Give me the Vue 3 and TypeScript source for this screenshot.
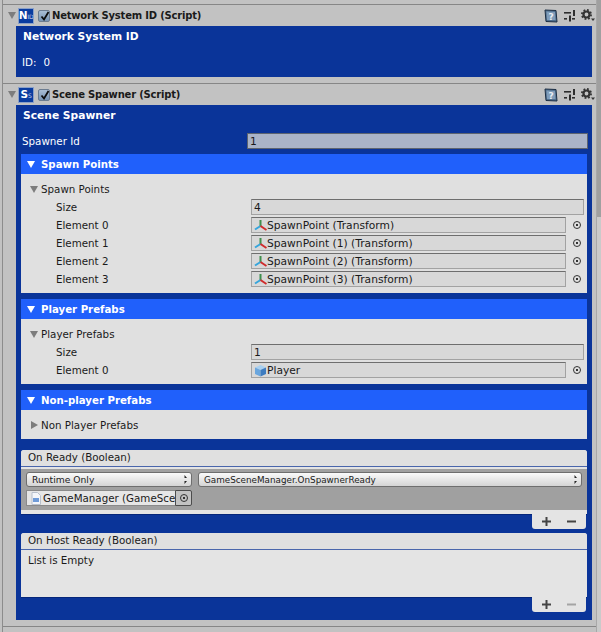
<script setup lang="ts">
type Row = { label: string; value: string; icon?: 'transform' | 'cube' };

const spawnRows: Row[] = [
  { label: 'Size', value: '4' },
  { label: 'Element 0', value: 'SpawnPoint (Transform)', icon: 'transform' },
  { label: 'Element 1', value: 'SpawnPoint (1) (Transform)', icon: 'transform' },
  { label: 'Element 2', value: 'SpawnPoint (2) (Transform)', icon: 'transform' },
  { label: 'Element 3', value: 'SpawnPoint (3) (Transform)', icon: 'transform' },
];

const playerRows: Row[] = [
  { label: 'Size', value: '1' },
  { label: 'Element 0', value: 'Player', icon: 'cube' },
];

const sections = [
  { title: 'Spawn Points', rows: spawnRows, open: true },
  { title: 'Player Prefabs', rows: playerRows, open: true },
  { title: 'Non-player Prefabs', foldout: 'Non Player Prefabs', rows: [] as Row[], open: false },
];

const components = [
  { big: 'N', small: 'ID', name: 'Network System ID (Script)' },
  { big: 'S', small: 'S', name: 'Scene Spawner (Script)' },
];
</script>

<template>
  <div class="window">
    <div class="main">
      <template v-for="(comp, i) in components" :key="comp.name">
        <div class="comp-head">
          <span class="fold"></span>
          <span class="script-icon"><b>{{ comp.big }}</b><i>{{ comp.small }}</i></span>
          <span class="check">
            <svg width="11" height="11" viewBox="0 0 11 11"><path d="M2.5 5.5 L5 8.5 L9.5 1" fill="none" stroke="#0c0c0c" stroke-width="1.8" /></svg>
          </span>
          <span class="comp-name">{{ comp.name }}</span>
          <span class="head-icons">
            <svg class="book" width="14" height="14" viewBox="0 0 14 14">
              <path d="M1 1 L12 1.5 L13 13 L2 12.5 Z" fill="#4f6f8f" stroke="#1c2e44" />
              <path d="M2.5 2.5 L11 3 L11.5 11 L3 11 Z" fill="#7f9cb9" />
              <text x="7" y="10.5" text-anchor="middle" class="q">?</text>
            </svg>
            <svg class="sliders" width="12" height="12" viewBox="0 0 12 12" fill="#2e2e2e">
              <rect x="0" y="2" width="7" height="1.6" />
              <rect x="9" y="0" width="2" height="6" />
              <rect x="0" y="8" width="3" height="1.6" />
              <rect x="5" y="5.5" width="2" height="6" />
              <rect x="8" y="8" width="3" height="1.6" />
            </svg>
            <svg class="gear" width="14" height="13" viewBox="0 0 14 13" fill="none">
              <circle cx="5.5" cy="5.5" r="3" stroke="#333" stroke-width="2.2" />
              <circle cx="5.5" cy="5.5" r="4.6" stroke="#333" stroke-width="1.8" stroke-dasharray="1.8 1.81" />
              <path d="M10 9.5 H14 L12 12 Z" fill="#333" />
            </svg>
          </span>
        </div>

        <div v-if="i === 0" class="panel small-panel">
          <div class="panel-title">Network System ID</div>
          <div class="id-row"><span>ID:</span><span>0</span></div>
        </div>

        <div v-else class="panel">
          <div class="panel-title">Scene Spawner</div>
          <div class="spawner-row">
            <span class="spawner-label">Spawner Id</span>
            <span class="field spawner-field">1</span>
          </div>

          <section v-for="s in sections" :key="s.title" class="section">
            <div class="section-head"><span class="white-tri"></span>{{ s.title }}</div>
            <div class="section-body">
              <div class="foldout">
                <span :class="s.open ? 'tri-down' : 'tri-right'"></span>{{ s.foldout ?? s.title }}
              </div>
              <div v-for="r in s.rows" :key="r.label" class="row">
                <span class="row-label">{{ r.label }}</span>
                <span class="field">
                  <svg v-if="r.icon === 'transform'" class="obj-icon" width="13" height="13" viewBox="0 0 13 13" fill="none" stroke-width="2">
                    <path d="M6.5 7 V1" stroke="#3f8f4c" />
                    <path d="M6.5 7 L1 10.5" stroke="#35a5dc" />
                    <path d="M6.5 7 L12.5 11" stroke="#d02a2a" />
                  </svg>
                  <svg v-if="r.icon === 'cube'" class="obj-icon" width="13" height="13" viewBox="0 0 13 13">
                    <path d="M6.5 1 L12 3.5 L6.5 6 L1 3.5 Z" fill="#a8d0f0" />
                    <path d="M1 3.5 L6.5 6 V12.5 L1 10 Z" fill="#6aa6de" />
                    <path d="M12 3.5 L6.5 6 V12.5 L12 10 Z" fill="#3d7cc0" />
                  </svg>
                  {{ r.value }}
                </span>
                <span v-if="r.icon" class="target"><i></i></span>
              </div>
            </div>
          </section>

          <div class="event first-event">
            <div class="event-head">On Ready (Boolean)</div>
            <div class="event-body gray">
              <div class="call-row">
                <span class="popup left-popup">Runtime Only<span class="arrows"></span></span>
                <span class="popup right-popup">GameSceneManager.OnSpawnerReady<span class="arrows"></span></span>
              </div>
              <div class="object-pick">
                <span class="pick-field">
                  <svg class="file-icon" width="10" height="13" viewBox="0 0 10 13">
                    <path d="M1 .5 H6.5 L9.5 3.5 V12.5 H1 Z" fill="#f4f6fa" stroke="#b8c0cc" />
                    <rect x="2" y="6" width="6" height="4" fill="#6f9bd8" />
                  </svg>
                  GameManager (GameSce
                </span>
                <span class="pick-target"><i></i></span>
              </div>
            </div>
            <div class="event-tail"></div>
          </div>
          <div class="footer">
            <svg width="9" height="9" viewBox="0 0 9 9" fill="#444"><rect x="3.5" y="0" width="2" height="9" /><rect x="0" y="3.5" width="9" height="2" /></svg>
            <svg width="9" height="9" viewBox="0 0 9 9" fill="#444"><rect x="0" y="3.5" width="9" height="2" /></svg>
          </div>

          <div class="event">
            <div class="event-head">On Host Ready (Boolean)</div>
            <div class="event-body empty">List is Empty</div>
          </div>
          <div class="footer">
            <svg width="9" height="9" viewBox="0 0 9 9" fill="#444"><rect x="3.5" y="0" width="2" height="9" /><rect x="0" y="3.5" width="9" height="2" /></svg>
            <svg width="9" height="9" viewBox="0 0 9 9" fill="#a4a4a4"><rect x="0" y="3.5" width="9" height="2" /></svg>
          </div>
        </div>
      </template>
      <div class="end-line"></div>
    </div>
    <div class="scrollbar"><div class="thumb"></div></div>
  </div>
</template>

<style>
html,
body {
  margin: 0;
  background: #c2c2c2;
}
</style>

<style scoped>
.window {
  display: flex;
  width: 601px;
  height: 632px;
  overflow: hidden;
  background: #c2c2c2;
  font-family: 'DejaVu Sans', sans-serif;
  font-size: 10.3px;
  color: #1a1a1a;
}

.main {
  width: 593px;
  margin-left: 2px;
  padding-top: 4px;
  border-left: 1px solid #8c8c8c;
  border-right: 1px solid #a8a8a8;
  flex-shrink: 0;
}

.comp-head {
  display: flex;
  align-items: center;
  height: 21px;
  border-top: 1px solid #868686;
  padding-left: 5px;
}

.fold {
  width: 0;
  height: 0;
  border-left: 4px solid transparent;
  border-right: 4px solid transparent;
  border-top: 7px solid #7d7d7d;
}

.script-icon {
  display: flex;
  align-items: baseline;
  justify-content: center;
  width: 16px;
  height: 16px;
  margin-left: 2px;
  background: #0a3ca0;
  border: 1px solid #8aa0c8;
  box-sizing: border-box;
  color: #fff;
  line-height: 13px;
  overflow: hidden;
}

.script-icon b {
  font-size: 10.5px;
}

.script-icon i {
  font-size: 6px;
  font-style: normal;
  letter-spacing: -0.4px;
  color: #c8d4ee;
}

.check {
  width: 12px;
  height: 12px;
  margin-left: 4px;
  border: 1px solid #6c7c90;
  border-radius: 2px;
  box-sizing: border-box;
  background: linear-gradient(#a8bdd4, #7894b4);
}

.check svg {
  display: block;
}

.comp-name {
  margin-left: 2px;
  font-weight: 700;
  font-size: 10px;
  letter-spacing: -0.2px;
}

.head-icons {
  display: flex;
  align-items: center;
  margin-left: auto;
  padding-right: 1px;
}

.sliders {
  margin-left: 6px;
}

.gear {
  margin-left: 5px;
}

.q {
  font-family: 'DejaVu Sans', sans-serif;
  font-size: 9px;
  font-weight: 700;
  fill: #e8eef4;
}

.panel {
  height: 515px;
  margin: 0 4px 6px 13px;
  padding: 0 5px;
  background: #0a3499;
  color: #fff;
}

.small-panel {
  height: 51px;
  padding: 0 6px;
}

.panel-title {
  height: 22px;
  line-height: 21px;
  font-weight: 700;
  font-size: 10.7px;
  padding-left: 2px;
}

.small-panel .panel-title {
  padding-left: 1px;
}

.id-row {
  display: flex;
  gap: 7px;
  margin-top: 6px;
  line-height: 16px;
}

.spawner-row {
  display: flex;
  align-items: center;
  height: 16px;
  margin-top: 6px;
  padding-left: 1px;
  margin-right: -1px;
}

.spawner-label {
  width: 225px;
}

.field {
  display: flex;
  align-items: center;
  flex: 1;
  height: 16px;
  padding-left: 2px;
  box-sizing: border-box;
  background: #d8d8d8;
  border: 1px solid #a2a2a2;
  border-top-color: #6e6e6e;
  color: #1a1a1a;
  font-size: 10.7px;
  white-space: nowrap;
  overflow: hidden;
}

.spawner-field {
  background: #aab4c8;
  border-color: #5c6470;
}

.section {
  margin-top: 5px;
  margin-bottom: 6px;
}

.section-head {
  display: flex;
  align-items: center;
  height: 20px;
  padding-left: 6px;
  background: #2060fb;
  color: #fff;
  font-weight: 700;
  font-size: 10.2px;
}

.white-tri {
  width: 0;
  height: 0;
  margin-right: 6px;
  border-left: 4px solid transparent;
  border-right: 4px solid transparent;
  border-top: 7px solid #fff;
}

.section-body {
  padding: 6px 3px 5px 0;
  background: #e0e0e0;
  color: #1a1a1a;
}

.foldout {
  display: flex;
  align-items: center;
  height: 18px;
  padding-left: 9px;
}

.tri-down {
  width: 0;
  height: 0;
  margin-right: 3px;
  border-left: 4px solid transparent;
  border-right: 4px solid transparent;
  border-top: 7px solid #7d7d7d;
}

.tri-right {
  width: 0;
  height: 0;
  margin-right: 3px;
  margin-left: 1px;
  border-top: 4px solid transparent;
  border-bottom: 4px solid transparent;
  border-left: 7px solid #7d7d7d;
}

.row {
  display: flex;
  align-items: center;
  height: 18px;
  padding-left: 35px;
}

.row-label {
  width: 195px;
  flex-shrink: 0;
}

.obj-icon {
  flex-shrink: 0;
}

.target {
  display: flex;
  align-items: center;
  justify-content: center;
  width: 18px;
  padding-left: 4px;
  box-sizing: border-box;
}

.target i,
.pick-target i {
  position: relative;
  width: 8px;
  height: 8px;
  box-sizing: border-box;
  border: 1px solid #333;
  border-radius: 50%;
}

.target i::after,
.pick-target i::after {
  content: '';
  position: absolute;
  left: 2px;
  top: 2px;
  width: 2px;
  height: 2px;
  background: #333;
}

.event {
  border-radius: 3px 3px 0 0;
  background: #e4e4e4;
  color: #1a1a1a;
  overflow: hidden;
  box-shadow: 0 1px 0 #05267a;
}

.first-event {
  margin-top: 11px;
}

.event-head {
  height: 17px;
  line-height: 15px;
  padding-left: 7px;
  box-sizing: border-box;
  background: #e0e0e0;
  border-bottom: 1px solid #4a66ac;
}

.event-body.gray {
  height: 41px;
  margin-top: 2px;
  background: #a0a0a0;
  padding: 3px 5px 0;
  box-sizing: border-box;
}

.event-tail {
  height: 4px;
  background: #e4e4e4;
}

.event-body.empty {
  height: 47px;
  padding: 3px 7px 0;
  line-height: 15px;
  box-sizing: border-box;
}

.call-row {
  display: flex;
  gap: 6px;
}

.popup {
  display: flex;
  align-items: center;
  height: 15px;
  padding-left: 5px;
  box-sizing: border-box;
  border-radius: 3px;
  border: 1px solid #6e6e6e;
  background: linear-gradient(#fafafa, #d4d4d4);
  font-size: 8.8px;
  position: relative;
}

.left-popup {
  width: 166px;
  font-size: 9.2px;
}

.right-popup {
  flex: 1;
}

.arrows {
  position: absolute;
  right: 4px;
  top: 2px;
  width: 5px;
  height: 9px;
  background: linear-gradient(to bottom, #222 0 3px, transparent 3px 6px, #222 6px 9px);
  clip-path: polygon(50% 0, 100% 33%, 0 33%, 0 67%, 100% 67%, 50% 100%);
}

.object-pick {
  display: flex;
  width: 166px;
  height: 16px;
  margin-top: 3px;
}

.pick-field {
  display: flex;
  align-items: center;
  gap: 2px;
  width: 149px;
  padding-left: 4px;
  box-sizing: border-box;
  background: #e6e6e6;
  font-size: 10.3px;
  white-space: nowrap;
  overflow: hidden;
  border: 1px solid #8a8a8a;
  border-right: none;
}

.file-icon {
  flex-shrink: 0;
}

.pick-target {
  display: flex;
  align-items: center;
  justify-content: center;
  width: 17px;
  box-sizing: border-box;
  background: #c2c2c2;
  border: 1px solid #4c4c4c;
  border-radius: 0 2px 2px 0;
}

.footer {
  display: flex;
  align-items: center;
  justify-content: space-between;
  width: 54px;
  height: 15px;
  margin: 0 1px 4px auto;
  padding: 0 10px;
  box-sizing: border-box;
  background: #e4e4e4;
  border-radius: 0 0 3px 3px;
}

.end-line {
  border-top: 1px solid #868686;
}

.scrollbar {
  flex: 1;
  background: #cacaca;
}

.thumb {
  height: 217px;
  background: #a0a0a0;
}
</style>
